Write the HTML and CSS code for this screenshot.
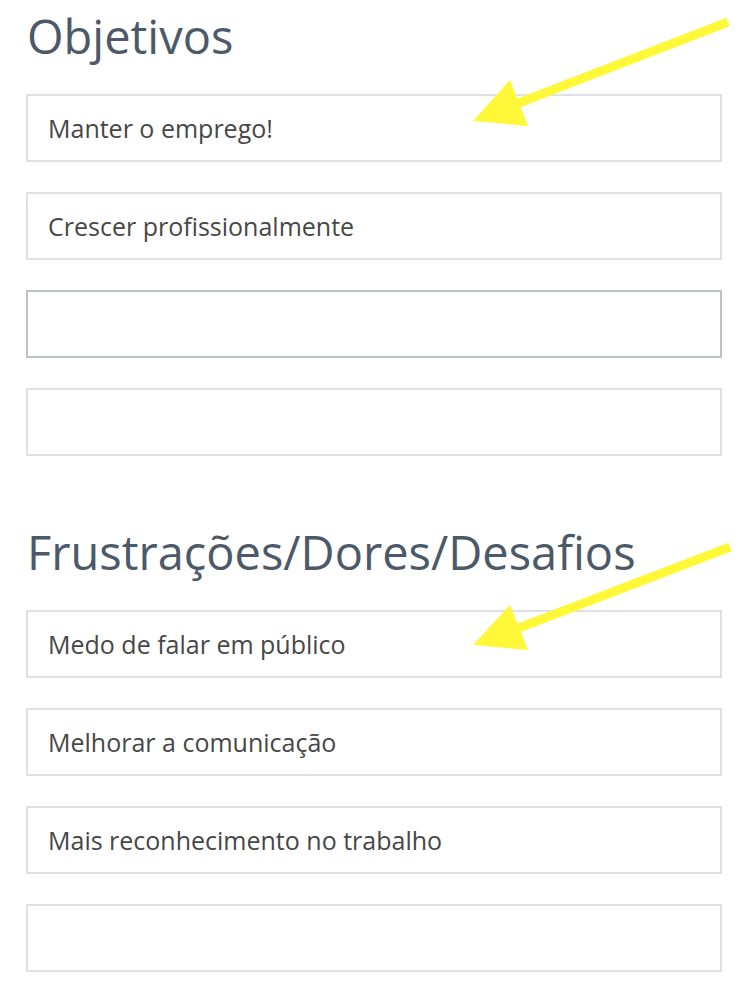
FILE: index.html
```html
<!DOCTYPE html>
<html lang="pt-BR">

<head>
    <meta charset="utf-8">
    <title>Persona</title>
    <link rel="stylesheet" href="styles.css">
</head>

<body>
    <main class="pagina">
        <section class="bloco">
            <h2 class="titulo">Objetivos</h2>
            <div class="campos">
                <div class="campo">Manter o emprego!</div>
                <div class="campo">Crescer profissionalmente</div>
                <div class="campo campo-foco"></div>
                <div class="campo"></div>
            </div>
            <svg class="seta" width="748" height="140" viewBox="0 0 748 140">
                <line x1="728" y1="22" x2="516" y2="104" stroke="#fff838" stroke-width="9" />
                <polygon points="510,80 473,121 528,126" fill="#fff838" />
            </svg>
        </section>

        <section class="bloco bloco-segundo">
            <h2 class="titulo">Frustrações/Dores/Desafios</h2>
            <div class="campos">
                <div class="campo">Medo de falar em público</div>
                <div class="campo">Melhorar a comunicação</div>
                <div class="campo">Mais reconhecimento no trabalho</div>
                <div class="campo"></div>
            </div>
            <svg class="seta" width="748" height="140" viewBox="0 0 748 140">
                <line x1="730" y1="31" x2="516" y2="113" stroke="#fff838" stroke-width="9" />
                <polygon points="510,89 473,129 528,134" fill="#fff838" />
            </svg>
        </section>
    </main>
</body>

</html>
```

FILE: styles.css
```css
body {
    margin: 0;
    background-color: #fff;
    font-family: "Open Sans", "Noto Sans", sans-serif;
}

.pagina {
    width: 748px;
}

.bloco {
    position: relative;
    padding: 8px 26px 0 26px;
}

.bloco-segundo {
    margin-top: 60px;
}

.titulo {
    margin: 0 0 30px 1px;
    font-size: 47px;
    line-height: 56px;
    font-weight: 400;
    color: #4b5969;
}

.campos {
    display: flex;
    flex-direction: column;
    gap: 30px;
}

.campo {
    box-sizing: border-box;
    height: 68px;
    padding: 0 20px;
    border: 2px solid #dde1e5;
    font-size: 25px;
    line-height: 64px;
    color: #474747;
}

.campo-foco {
    border-color: #bcc3c8;
}

.seta {
    position: absolute;
    top: 0;
    left: 0;
    overflow: visible;
}
```
